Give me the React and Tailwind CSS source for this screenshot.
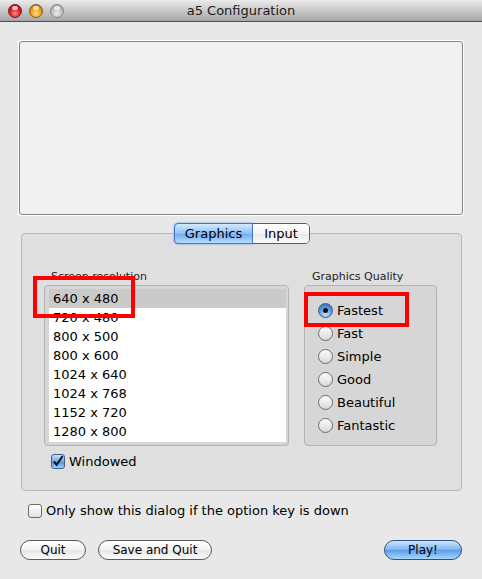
import React from 'react';

const resolutions = ['640 x 480', '720 x 480', '800 x 500', '800 x 600', '1024 x 640', '1024 x 768', '1152 x 720', '1280 x 800'];
const qualities = ['Fastest', 'Fast', 'Simple', 'Good', 'Beautiful', 'Fantastic'];

function Light({ color }) {
  const fills = {
    red: 'bg-[radial-gradient(circle_at_50%_70%,#ff8a8a_0%,#e0262a_45%,#8c0c10_100%)] border-[#7a1a1a]',
    orange: 'bg-[radial-gradient(circle_at_50%_70%,#ffe48a_0%,#f3a21e_45%,#a8570a_100%)] border-[#8a5a1a]',
    gray: 'bg-[radial-gradient(circle_at_50%_70%,#eeeeee_0%,#bdbdbd_50%,#8a8a8a_100%)] border-[#8a8a8a]'
  };
  return (
    <div className={`relative w-[14px] h-[14px] rounded-full border ${fills[color]}`}>
      <div className="absolute left-[3px] top-[1px] w-[6px] h-[4px] rounded-full bg-white/70" />
    </div>
  );
}

function Radio({ checked, label }) {
  return (
    <div className="flex items-center h-[23px]">
      <div
        className={`w-[15px] h-[15px] rounded-full border flex items-center justify-center ${
          checked
            ? 'border-[#3a5d8e] bg-[radial-gradient(circle_at_50%_80%,#c8e4ff_0%,#5d9be0_50%,#2a65b5_100%)]'
            : 'border-[#6d6d6d] bg-[linear-gradient(#fdfdfd,#d8d8d8)]'
        }`}
      >
        {checked && <div className="w-[5px] h-[5px] rounded-full bg-[#111]" />}
      </div>
      <span className="ml-[4px] text-[13px] text-black">{label}</span>
    </div>
  );
}

function Pill({ children, blue, className = '' }) {
  return (
    <button
      className={`h-[20px] rounded-full border text-[12px] text-black flex items-center justify-center ${
        blue
          ? 'border-[#2f4f80] bg-[linear-gradient(#cde6ff,#7ab4f0_50%,#5e9ce6_51%,#a9d6ff)]'
          : 'border-[#5a5a5a] bg-[linear-gradient(#ffffff,#f3f3f3_50%,#e6e6e6_51%,#fbfbfb)]'
      } ${className}`}
    >
      {children}
    </button>
  );
}

export default function App() {
  return (
    <div className="relative w-[482px] h-[579px] bg-[#e8e8e8] overflow-hidden" style={{ fontFamily: '"DejaVu Sans", "Liberation Sans", sans-serif' }}>
      {/* title bar */}
      <div className="h-[22px] border-b border-[#505050] bg-[linear-gradient(#ebebeb,#c8c8c8_50%,#a6a6a6)] grid grid-cols-[1fr_auto_1fr] items-center">
        <div className="flex gap-[7px] pl-[8px]">
          <Light color="red" />
          <Light color="orange" />
          <Light color="gray" />
        </div>
        <div className="text-[13px] text-[#1a1a1a] leading-none">a5 Configuration</div>
        <div />
      </div>

      {/* image area */}
      <div className="ml-[18px] mt-[18px] w-[446px] h-[176px] rounded-[4px] bg-white p-[1px]">
        <div className="w-full h-full rounded-[3px] border border-[#858585] bg-[#f1f1f1]" />
      </div>

      {/* tabs */}
      <div className="relative z-10 mt-[7px] flex justify-center pl-[2px]">
        <div className="flex h-[21px] rounded-[5px] border border-[#5a5a5a]">
          <div className="w-[79px] flex items-center justify-center rounded-l-[4px] border border-[#4677c4] -m-[1px] mr-0 bg-[linear-gradient(#d5eaff,#8dc0f5_50%,#6eaaef_51%,#b6dcff)] text-[13px] text-black shadow-[0_0_2px_#4b8be0]">
            Graphics
          </div>
          <div className="w-[56px] flex items-center justify-center rounded-r-[4px] bg-[linear-gradient(#ffffff,#f4f4f4_50%,#e8e8e8_51%,#fafafa)] text-[13px] text-black">
            Input
          </div>
        </div>
      </div>

      <div className="-mt-[11px] ml-[21px] w-[441px] h-[258px] rounded-[4px] border border-[#b8b8b8] bg-[#dfdfdf] pl-[22px] pt-[36px]">
        <div className="flex gap-[15px]">
          <div>
            <div className="pl-[7px] text-[11px] text-[#222] leading-[14px] h-[15px]">Screen resolution</div>
            <div className="w-[245px] h-[161px] rounded-[4px] border border-[#b3b3b3] bg-[#d6d6d6] pl-[4px] pr-[2px] pt-[3px] pb-[3px]">
              <div className="bg-white h-full">
                {resolutions.map((r, i) => (
                  <div key={r} className={`h-[19px] pl-[4px] flex items-center text-[13px] text-black ${i === 0 ? 'bg-[#cacaca]' : ''}`}>
                    {r}
                  </div>
                ))}
              </div>
            </div>
            <div className="mt-[6px] ml-[7px] flex items-center">
              <div className="w-[14px] h-[15px] rounded-[3px] border border-[#3d5f8f] bg-[linear-gradient(#c9e3ff,#6aa6ea_50%,#4d8ee0_51%,#9fd0ff)] flex items-center justify-center">
                <svg width="13" height="13" viewBox="0 0 13 13">
                  <path d="M2 6.5 L5 10 L11.5 0.5" fill="none" stroke="#111" strokeWidth="2.2" />
                </svg>
              </div>
              <span className="ml-[4px] text-[13px] text-black">Windowed</span>
            </div>
          </div>
          <div>
            <div className="pl-[8px] text-[11px] text-[#222] leading-[14px] h-[15px]">Graphics Quality</div>
            <div className="w-[133px] h-[161px] rounded-[4px] border border-[#b3b3b3] bg-[#d6d6d6] pl-[13px] pt-[13px]">
              {qualities.map((q, i) => (
                <Radio key={q} label={q} checked={i === 0} />
              ))}
            </div>
          </div>
        </div>
      </div>

      {/* option key checkbox */}
      <div className="mt-[12px] ml-[28px] flex items-center h-[16px]">
        <div className="w-[14px] h-[14px] rounded-[3px] border border-[#6d6d6d] bg-[linear-gradient(#ffffff,#e2e2e2)]" />
        <span className="ml-[4px] text-[13px] text-black">Only show this dialog if the option key is down</span>
      </div>

      {/* buttons */}
      <div className="mt-[21px] px-[20px] flex items-center">
        <Pill className="w-[66px]">Quit</Pill>
        <Pill className="w-[114px] ml-[12px]">Save and Quit</Pill>
        <Pill blue className="w-[78px] ml-auto">Play!</Pill>
      </div>

      {/* red annotation boxes */}
      <div className="absolute left-[33px] top-[276px] w-[102px] h-[42px] border-[4px] border-[#ff0000]" />
      <div className="absolute left-[304px] top-[292px] w-[105px] h-[35px] border-[4px] border-[#ff0000]" />
    </div>
  );
}
